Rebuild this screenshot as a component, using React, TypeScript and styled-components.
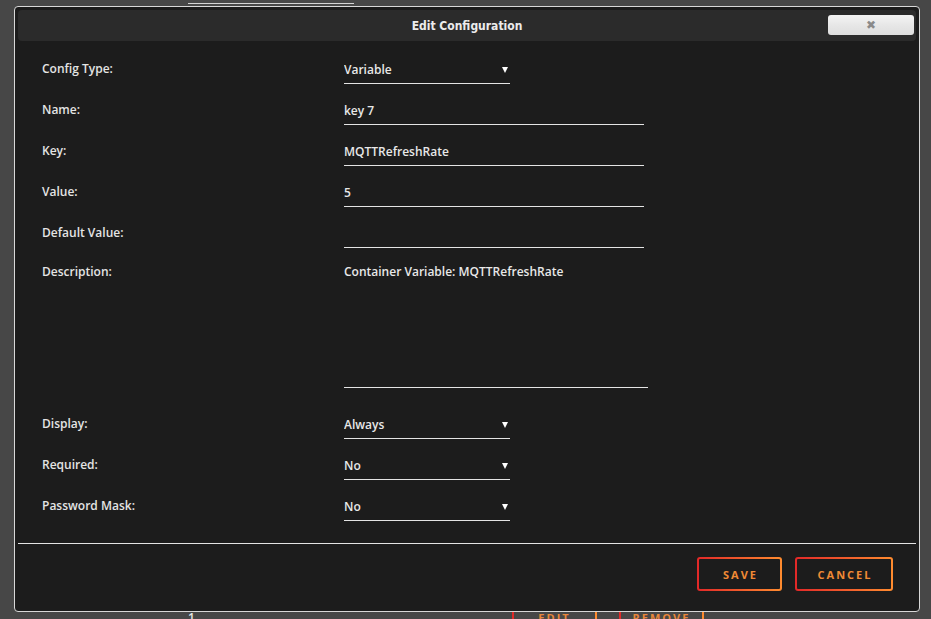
import React from 'react';
import styled, { createGlobalStyle, css } from 'styled-components';

const GlobalStyle = createGlobalStyle`
  html, body {
    margin: 0;
    padding: 0;
    background: #474747;
    height: 100%;
    overflow: hidden;
  }
  body {
    font-family: "Open Sans", "Liberation Sans", sans-serif;
  }
`;

// page behind the dialog (mostly hidden)
const Page = styled.div`
  position: relative;
  height: 619px;
  padding-top: 3px;
  box-sizing: border-box;
`;

const TabLine = styled.div`
  margin-left: 188px;
  width: 166px;
  height: 1px;
  background: #d4d4d4;
`;

const PageRow = styled.div`
  display: flex;
  align-items: center;
  margin-top: 597px;
  height: 33px;
`;

const RowIndex = styled.span`
  width: 320px;
  padding-left: 188px;
  box-sizing: border-box;
  color: #e6e6e6;
  font-size: 12px;
  font-weight: 600;
`;

const gradientBorder = css`
  border: 2px solid transparent;
  border-radius: 3px;
  background:
    linear-gradient(#1c1c1c, #1c1c1c) padding-box,
    linear-gradient(90deg, #e22828, #ff8c2f) border-box;
`;

const PageButton = styled.span<{ $w: number }>`
  ${gradientBorder};
  background:
    linear-gradient(#474747, #474747) padding-box,
    linear-gradient(90deg, #e22828, #ff8c2f) border-box;
  width: ${(p) => p.$w}px;
  height: 33px;
  box-sizing: border-box;
  display: flex;
  align-items: center;
  justify-content: center;
  color: #e8863a;
  font-size: 11px;
  font-weight: 700;
  letter-spacing: 2px;
  margin-right: 22px;
`;

const Spacer = styled.span`
  width: 192px;
`;

// dialog
const Dialog = styled.div`
  position: absolute;
  left: 14px;
  top: 6px;
  width: 906px;
  height: 606px;
  box-sizing: border-box;
  border: 1px solid #d8d8d8;
  border-radius: 4px;
  background: #1c1c1c;
  padding: 3px;
  display: flex;
  flex-direction: column;
`;

const TitleBar = styled.div`
  height: 31px;
  border-radius: 4px;
  background: #2b2b2b;
  display: flex;
  align-items: center;
  justify-content: center;
  position: relative;
`;

const Title = styled.span`
  font-family: "DejaVu Sans Condensed", "DejaVu Sans", sans-serif;
  font-stretch: condensed;
  font-weight: 700;
  font-size: 12px;
  color: #ececec;
`;

const CloseButton = styled.button`
  position: absolute;
  right: 2px;
  top: 5px;
  width: 86px;
  height: 20px;
  border: none;
  border-radius: 3px;
  background: linear-gradient(#f4f4f4, #e6e6e6 55%, #dedede);
  color: #8a8a8a;
  font-family: "DejaVu Sans", sans-serif;
  font-size: 12px;
  font-weight: 700;
  line-height: 20px;
  padding: 0;
`;

const Form = styled.div`
  display: flex;
  flex-direction: column;
  padding: 14px 0 0 24px;
  flex: 1;
`;

const Row = styled.div<{ $gap?: number }>`
  display: flex;
  align-items: flex-start;
  margin-bottom: ${(p) => p.$gap ?? 12}px;
`;

const Label = styled.label<{ $top?: boolean }>`
  width: 302px;
  flex-shrink: 0;
  color: #e4e4e4;
  font-size: 12px;
  font-weight: 600;
  line-height: ${(p) => (p.$top ? 24 : 28)}px;
`;

const fieldText = css`
  font-family: "Open Sans", "Liberation Sans", sans-serif;
  font-size: 12px;
  font-weight: 600;
  color: #e8e8e8;
`;

const TextInput = styled.input`
  ${fieldText};
  width: 300px;
  height: 29px;
  box-sizing: border-box;
  background: transparent;
  border: none;
  border-bottom: 1px solid #e4e4e4;
  padding: 0;
  outline: none;
`;

const SelectWrap = styled.div`
  position: relative;
  width: 166px;
  &::after {
    content: '';
    position: absolute;
    right: 2px;
    top: 12px;
    border-left: 3px solid transparent;
    border-right: 3px solid transparent;
    border-top: 6px solid #ffffff;
    pointer-events: none;
  }
`;

const Select = styled.select`
  ${fieldText};
  appearance: none;
  width: 166px;
  height: 29px;
  box-sizing: border-box;
  background: transparent;
  border: none;
  border-bottom: 1px solid #e4e4e4;
  border-radius: 0;
  padding: 0;
  outline: none;
  option {
    background: #1c1c1c;
  }
`;

const TextArea = styled.textarea`
  ${fieldText};
  width: 304px;
  height: 128px;
  box-sizing: border-box;
  background: transparent;
  border: none;
  border-bottom: 1px solid #e4e4e4;
  padding: 4px 0 0;
  line-height: 16px;
  resize: none;
  outline: none;
`;

const Divider = styled.hr`
  margin: auto 0 0;
  border: none;
  border-top: 1px solid #e4e4e4;
  height: 0;
`;

const Footer = styled.div`
  display: flex;
  justify-content: flex-end;
  gap: 13px;
  padding: 13px 23px 0 0;
  height: 64px;
  box-sizing: border-box;
`;

const ActionButton = styled.button<{ $w: number }>`
  ${gradientBorder};
  width: ${(p) => p.$w}px;
  height: 34px;
  color: #f08a35;
  font-family: "Open Sans", "Liberation Sans", sans-serif;
  font-size: 11px;
  font-weight: 700;
  letter-spacing: 2px;
  padding: 0 0 0 2px;
  cursor: pointer;
`;

const SelectField = ({ value, options }: { value: string; options: string[] }) => (
  <SelectWrap>
    <Select defaultValue={value}>
      {options.map((o) => (
        <option key={o}>{o}</option>
      ))}
    </Select>
  </SelectWrap>
);

export default function App() {
  return (
    <>
      <GlobalStyle />
      <Page>
        <TabLine />
        <PageRow>
          <RowIndex>1</RowIndex>
          <Spacer />
          <PageButton $w={85}>EDIT</PageButton>
          <PageButton $w={85}>REMOVE</PageButton>
        </PageRow>

        <Dialog>
          <TitleBar>
            <Title>Edit Configuration</Title>
            <CloseButton>✖</CloseButton>
          </TitleBar>
          <Form>
            <Row>
              <Label>Config Type:</Label>
              <SelectField value="Variable" options={['Path', 'Port', 'Variable', 'Label', 'Device']} />
            </Row>
            <Row>
              <Label>Name:</Label>
              <TextInput defaultValue="key 7" />
            </Row>
            <Row>
              <Label>Key:</Label>
              <TextInput defaultValue="MQTTRefreshRate" />
            </Row>
            <Row>
              <Label>Value:</Label>
              <TextInput defaultValue="5" />
            </Row>
            <Row>
              <Label>Default Value:</Label>
              <TextInput defaultValue="" />
            </Row>
            <Row $gap={22}>
              <Label $top>Description:</Label>
              <TextArea defaultValue="Container Variable: MQTTRefreshRate" />
            </Row>
            <Row>
              <Label>Display:</Label>
              <SelectField value="Always" options={['Always', 'Advanced']} />
            </Row>
            <Row>
              <Label>Required:</Label>
              <SelectField value="No" options={['Yes', 'No']} />
            </Row>
            <Row $gap={0}>
              <Label>Password Mask:</Label>
              <SelectField value="No" options={['Yes', 'No']} />
            </Row>
          </Form>
          <Divider />
          <Footer>
            <ActionButton $w={85}>SAVE</ActionButton>
            <ActionButton $w={98}>CANCEL</ActionButton>
          </Footer>
        </Dialog>
      </Page>
    </>
  );
}
